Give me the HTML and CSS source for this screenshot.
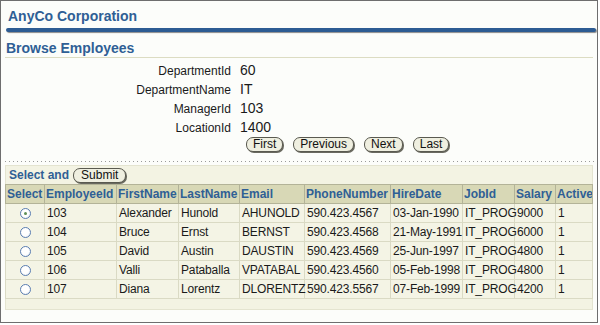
FILE: index.html
```html
<!DOCTYPE html>
<html>
<head>
<meta charset="utf-8">
<link rel="stylesheet" href="styles.css">
</head>
<body>
<div class="frame">
  <div class="brand">AnyCo Corporation</div>
  <div class="bar"></div>
  <h1 class="page-title">Browse Employees</h1>
  <div class="form">
    <div class="label">DepartmentId</div><div class="value">60</div>
    <div class="label">DepartmentName</div><div class="value">IT</div>
    <div class="label">ManagerId</div><div class="value">103</div>
    <div class="label">LocationId</div><div class="value">1400</div>
    <div class="nav">
      <button class="btn">First</button>
      <button class="btn">Previous</button>
      <button class="btn">Next</button>
      <button class="btn">Last</button>
    </div>
  </div>
  <div class="dots"></div>
  <div class="panel">
    <div class="control">Select and <button class="btn">Submit</button></div>
    <table class="grid">
      <colgroup>
        <col class="c-sel"><col class="c-id"><col class="c-fn"><col class="c-ln"><col class="c-em">
        <col class="c-ph"><col class="c-hd"><col class="c-job"><col class="c-sal"><col class="c-act">
      </colgroup>
      <thead>
        <tr><th>Select</th><th>EmployeeId</th><th>FirstName</th><th>LastName</th><th>Email</th><th>PhoneNumber</th><th>HireDate</th><th>JobId</th><th>Salary</th><th>Active</th></tr>
      </thead>
      <tbody>
        <tr><td class="sel"><span class="radio on"></span></td><td>103</td><td>Alexander</td><td>Hunold</td><td>AHUNOLD</td><td>590.423.4567</td><td>03-Jan-1990</td><td>IT_PROG</td><td>9000</td><td>1</td></tr>
        <tr><td class="sel"><span class="radio"></span></td><td>104</td><td>Bruce</td><td>Ernst</td><td>BERNST</td><td>590.423.4568</td><td>21-May-1991</td><td>IT_PROG</td><td>6000</td><td>1</td></tr>
        <tr><td class="sel"><span class="radio"></span></td><td>105</td><td>David</td><td>Austin</td><td>DAUSTIN</td><td>590.423.4569</td><td>25-Jun-1997</td><td>IT_PROG</td><td>4800</td><td>1</td></tr>
        <tr><td class="sel"><span class="radio"></span></td><td>106</td><td>Valli</td><td>Pataballa</td><td>VPATABAL</td><td>590.423.4560</td><td>05-Feb-1998</td><td>IT_PROG</td><td>4800</td><td>1</td></tr>
        <tr><td class="sel"><span class="radio"></span></td><td>107</td><td>Diana</td><td>Lorentz</td><td>DLORENTZ</td><td>590.423.5567</td><td>07-Feb-1999</td><td>IT_PROG</td><td>4200</td><td>1</td></tr>
      </tbody>
    </table>
  </div>
</div>
</body>
</html>
```
FILE: styles.css
```css
html, body {
  margin: 0;
  padding: 0;
  background: #ffffff;
}
.frame {
  box-sizing: border-box;
  width: 598px;
  height: 323px;
  border: 1px solid #6e6e6e;
  background: #fcfdfa;
  padding: 7px 4px 0 4px;
  font-family: "Liberation Sans", Arial, sans-serif;
  color: #111;
}
.brand {
  font-size: 14px;
  line-height: 16px;
  font-weight: bold;
  color: #2f5f95;
  padding-left: 3px;
}
.bar {
  margin: 4px -3px 0 1px;
  height: 4px;
  border-radius: 2px;
  background: #2d5c93;
  box-shadow: 1px 1px 1px #8a8a8a;
}
.page-title {
  margin: 8px 0 0 0;
  font-size: 14px;
  line-height: 16px;
  font-weight: bold;
  color: #2f5f95;
  padding: 0 0 1px 1px;
  border-bottom: 1px solid #dcdcc2;
}
.form {
  display: grid;
  grid-template-columns: 226px auto;
  grid-auto-rows: 19px;
  column-gap: 9px;
  align-items: baseline;
  margin-top: 3px;
}
.label {
  font-size: 12px;
  line-height: 19px;
  text-align: right;
  color: #1a1a1a;
}
.value {
  font-size: 14px;
  line-height: 19px;
  color: #1a1a1a;
}
.nav {
  grid-column: 2;
  align-self: start;
  display: flex;
  gap: 10px;
  margin-left: 6px;
}
.btn {
  font-family: "Liberation Sans", Arial, sans-serif;
  font-size: 12px;
  line-height: 13px;
  height: 15px;
  padding: 0 6px;
  margin: 0;
  color: #111;
  background: #efefe0;
  border: 1px solid #5a5a50;
  border-radius: 7px;
  box-shadow: 1px 1px 0 #6a6a60;
}
.dots {
  margin-top: 5px;
  height: 1px;
  background-image: repeating-linear-gradient(to right, #9a9a9a 0 1px, transparent 1px 4px);
  margin-right: -1px;
}
.panel {
  margin-top: 3px;
  background: #f3f3e3;
  border: 1px solid #e4e4d0;
  padding-bottom: 10px;
}
.control {
  height: 18px;
  display: flex;
  align-items: center;
  gap: 4px;
  padding-left: 3px;
  font-size: 12px;
  font-weight: bold;
  color: #2f5f95;
}
.control .btn {
  font-weight: normal;
  padding: 0 7px;
}
.grid {
  border-collapse: collapse;
  table-layout: fixed;
  width: 587px;
  margin-left: -1px;
  font-size: 12px;
}
.c-sel { width: 39px; }
.c-id { width: 72px; }
.c-fn { width: 62px; }
.c-ln { width: 61px; }
.c-em { width: 65px; }
.c-ph { width: 86px; }
.c-hd { width: 72px; }
.c-job { width: 52px; }
.c-sal { width: 41px; }
.c-act { width: 37px; }
.grid th {
  height: 18px;
  padding: 0 1px;
  text-align: left;
  font-weight: bold;
  color: #2f5f95;
  background: #d8d8b6;
  border: 1px solid #b3b398;
  white-space: nowrap;
  overflow: hidden;
}
.grid td {
  height: 18px;
  padding: 0 0 0 2px;
  background: #f4f4e5;
  border: 1px solid #dadac4;
  white-space: nowrap;
  letter-spacing: -0.15px;
  color: #1a1a1a;
}
.grid td.sel {
  text-align: center;
  padding: 0;
}
.radio {
  display: inline-block;
  vertical-align: middle;
  box-sizing: border-box;
  width: 11px;
  height: 11px;
  border-radius: 50%;
  border: 1px solid #5a7db0;
  background: radial-gradient(circle at 40% 40%, #ffffff 0, #ffffff 50%, #dfe6ee 100%);
  position: relative;
}
.radio.on::after {
  content: "";
  position: absolute;
  left: 3px;
  top: 3px;
  width: 3px;
  height: 3px;
  border-radius: 50%;
  background: #5f8f55;
}
```
